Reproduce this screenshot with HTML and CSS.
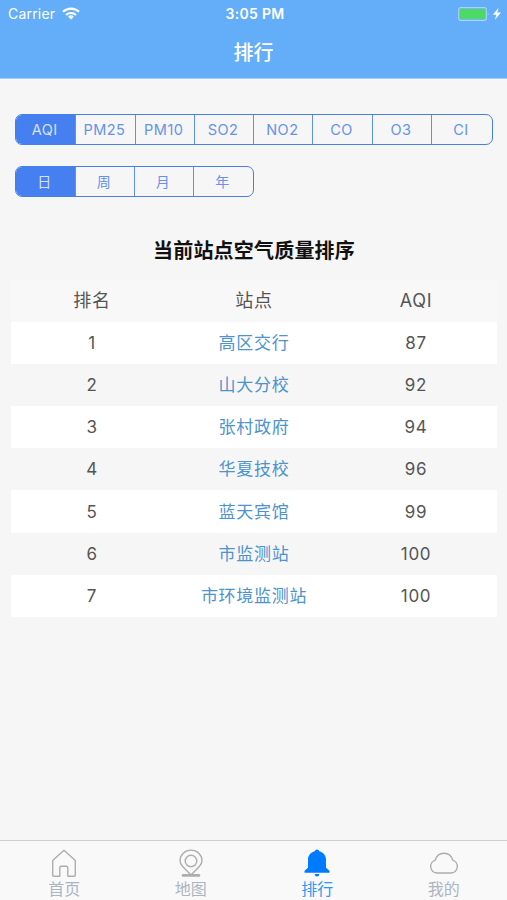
FILE: index.html
```html
<!DOCTYPE html>
<html lang="zh-CN">
<head>
<meta charset="UTF-8">
<meta name="viewport" content="width=device-width, initial-scale=1.0">
<title>排行</title>
<link rel="stylesheet" href="styles.css">
</head>
<body>
<header class="header">
    <div class="status-bar">
        <div class="carrier">
            <span>Carrier</span>
            <svg class="wifi" width="18" height="13" viewBox="0 0 18 13" fill="none" stroke="#fff" stroke-width="2.2">
                <path d="M1 4.8a11.5 11.5 0 0 1 16 0"/>
                <path d="M4 8a7.2 7.2 0 0 1 10 0"/>
                <path d="M9 12.6l-2.9-2.9a4.1 4.1 0 0 1 5.8 0z" fill="#fff" stroke="none"/>
            </svg>
        </div>
        <div class="time">3:05 PM</div>
        <svg class="battery" width="44" height="14" viewBox="0 0 44 14">
            <rect x="0.7" y="0.7" width="27.6" height="12.6" rx="2" fill="none" stroke="#a9d2fc" stroke-width="1.2"/>
            <rect x="2" y="2" width="25" height="10" rx="0.8" fill="#4cd964"/>
            <path d="M29.8 5q1.6 2 0 4z" fill="#a9d2fc"/>
            <path d="M40.6 0.8l-5.8 7h3.6l-1.5 5 6.2-7.200h-3.900z" fill="#fff"/>
        </svg>
    </div>
    <div class="title">排行</div>
</header>

<main class="content">
    <div class="segment segment-type">
        <button class="active">AQI</button>
        <button>PM25</button>
        <button>PM10</button>
        <button>SO2</button>
        <button>NO2</button>
        <button>CO</button>
        <button>O3</button>
        <button>CI</button>
    </div>
    <div class="segment segment-date">
        <button class="active">日</button>
        <button>周</button>
        <button>月</button>
        <button>年</button>
    </div>

    <h1>当前站点空气质量排序</h1>
    <table>
        <thead>
            <tr><th>排名</th><th>站点</th><th>AQI</th></tr>
        </thead>
        <tbody>
            <tr><td>1</td><td class="station">高区交行</td><td>87</td></tr>
            <tr><td>2</td><td class="station">山大分校</td><td>92</td></tr>
            <tr><td>3</td><td class="station">张村政府</td><td>94</td></tr>
            <tr><td>4</td><td class="station">华夏技校</td><td>96</td></tr>
            <tr><td>5</td><td class="station">蓝天宾馆</td><td>99</td></tr>
            <tr><td>6</td><td class="station">市监测站</td><td>100</td></tr>
            <tr><td>7</td><td class="station">市环境监测站</td><td>100</td></tr>
        </tbody>
    </table>
</main>

<nav class="tabs">
    <a class="tab">
        <svg width="30" height="30" viewBox="0 0 30 30" fill="none" stroke="#adadad" stroke-width="1.4" stroke-linejoin="round">
            <path d="M15 2.2L3.7 12.6v14.7q0 1 1 1h6.1v-8.6q0-1.4 1.4-1.4h5.2q1.4 0 1.4 1.4v8.6h6.5q1 0 1-1V12.6z"/>
        </svg>
        <span>首页</span>
    </a>
    <a class="tab">
        <svg width="30" height="30" viewBox="0 0 30 30" fill="none" stroke="#adadad" stroke-width="1.4">
            <path d="M15 27L6.7 18.6Q4 16 4 12.6a11 10.5 0 0 1 22 0q0 3.4-2.7 6z" stroke-linejoin="round"/>
            <circle cx="15" cy="13" r="5.8"/>
            <path d="M7 27.4h16" stroke-width="2.6" stroke-linecap="round"/>
        </svg>
        <span>地图</span>
    </a>
    <a class="tab active">
        <svg width="30" height="30" viewBox="0 0 30 30" fill="#007aff">
            <path d="M15 1.4q1.8 0 2.3 1.8c4 1 6.7 4.3 6.7 8.4v8.2l3.2 2.6q1 2.4-.6 2.4H3.4q-1.6 0-.6-2.4L6 19.8v-8.2c0-4.1 2.7-7.4 6.7-8.4q.5-1.8 2.3-1.8z"/>
            <path d="M12.7 26h4.6q-.2 2.5-2.3 2.5t-2.3-2.5z"/>
        </svg>
        <span>排行</span>
    </a>
    <a class="tab">
        <svg width="30" height="30" viewBox="0 0 30 30" fill="none" stroke="#adadad" stroke-width="1.4">
            <path d="M8.2 25A6.6 6.6 0 0 1 6.3 12.1C7.6 7.6 11 5.2 15 5.2s7.4 2.4 8.7 6.9A6.6 6.6 0 0 1 21.8 25z"/>
        </svg>
        <span>我的</span>
    </a>
</nav>
</body>
</html>
```
FILE: styles.css
```css
* {
    box-sizing: border-box;
}

body {
    margin: 0;
    height: 900px;
    display: flex;
    flex-direction: column;
    background-color: #f6f6f6;
    font-family: Inter, "Noto Sans CJK SC", sans-serif;
    overflow: hidden;
}

.header {
    height: 79px;
    background-color: #64adf9;
    border-bottom: 1px solid #a5cffb;
    color: #fff;
}

.status-bar {
    height: 27px;
    padding: 0 5px 0 8px;
    display: grid;
    grid-template-columns: 1fr auto 1fr;
    align-items: center;
    font-size: 14px;
}

.carrier {
    display: flex;
    align-items: center;
    gap: 7px;
    letter-spacing: 0.2px;
}

.time {
    font-size: 14px;
    font-weight: 600;
    letter-spacing: 0.3px;
}

.battery {
    justify-self: end;
}

.title {
    text-align: center;
    font-size: 20px;
    font-weight: 500;
    line-height: 52px;
}

.content {
    flex: 1;
    padding: 35px 10px 0 11px;
}

.segment {
    display: flex;
    height: 31px;
    margin-left: 4px;
    border: 1.5px solid #477fea;
    border-radius: 7px;
    overflow: hidden;
}

.segment-type {
    width: 478px;
}

.segment-date {
    width: 239px;
    margin-top: 21px;
}

.segment button {
    flex: 0 0 59.3px;
    padding: 0 2px 0 0;
    border: none;
    border-left: 1.5px solid #5f90ec;
    background: none;
    color: #6592ec;
    font-family: inherit;
    font-size: 14.5px;
    letter-spacing: 0.5px;
}

.segment button:first-child {
    border-left: none;
}

.segment button:last-child {
    flex: 1;
}

.segment-date button {
    flex-basis: 59px;
    padding-bottom: 2px;
    font-size: 14px;
}

.segment .active {
    background-color: #467ff0;
    color: #d5e3ff;
}

h1 {
    margin: 38px 0 0;
    text-align: center;
    font-size: 20px;
    font-weight: 700;
    line-height: 32px;
    letter-spacing: 0.2px;
    color: #111;
}

table {
    width: 100%;
    margin-top: 13px;
    border-collapse: collapse;
    table-layout: fixed;
    text-align: center;
    color: #555;
    letter-spacing: 0.7px;
}

th, td {
    height: 42.1px;
    padding: 0;
    font-size: 17px;
    font-weight: 400;
    line-height: 24px;
}

th {
    background-color: #f8f8f8;
    font-size: 18px;
}

tbody tr:nth-child(odd) {
    background-color: #fff;
}

.station {
    color: #4c93d0;
}

.tabs {
    display: flex;
    height: 60px;
    border-top: 1px solid #cfcfcf;
    background-color: #f9f9f9;
}

.tab {
    flex: 1;
    display: flex;
    flex-direction: column;
    align-items: center;
    padding-top: 7px;
    font-size: 16px;
    line-height: 22px;
    color: #acb4c2;
}

.tab:first-child {
    padding-left: 1px;
}

.tab.active {
    color: #299af5;
}
```
